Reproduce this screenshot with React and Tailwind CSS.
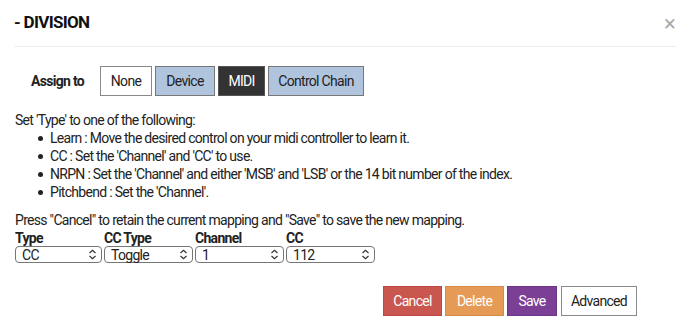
import React from 'react';

const Chevrons = () => (
  <svg width="9" height="11" viewBox="0 0 9 11" fill="none" stroke="#333" strokeWidth="1.2">
    <path d="M1.5 4 L4.5 1.2 L7.5 4" />
    <path d="M1.5 7 L4.5 9.8 L7.5 7" />
  </svg>
);

const Select = ({ value, width }) => (
  <div className={`flex items-center justify-between h-[17px] border border-[#767676] rounded-[4px] pl-[6px] pr-[4px] bg-white ${width}`}>
    <span className="leading-none">{value}</span>
    <Chevrons />
  </div>
);

const App = () => {
  const bullets = [
    'Learn : Move the desired control on your midi controller to learn it.',
    "CC : Set the 'Channel' and 'CC' to use.",
    "NRPN : Set the 'Channel' and either 'MSB' and 'LSB' or the 14 bit number of the index.",
    "Pitchbend : Set the 'Channel'.",
  ];

  return (
    <div className="w-[690px] h-[332px] bg-white text-[#222] font-['Roboto',sans-serif] text-[14px] tracking-[-0.05em] overflow-hidden">
      {/* header */}
      <div className="flex items-center justify-between h-[47px] mx-[14px] border-b border-[#eee]">
        <h1 className="text-[17px] font-bold text-[#111] tracking-[-0.04em]">- DIVISION</h1>
        <span className="text-[#aaa] text-[22px] leading-none mr-[1px] mt-[1px]">×</span>
      </div>

      {/* assign to */}
      <div className="flex items-center mt-[19px] ml-[31px] h-[30px]">
        <span className="font-bold w-[69px]">Assign to</span>
        <div className="flex gap-[3px] h-full">
          <button className="w-[52px] h-full border border-[#888] bg-white">None</button>
          <button className="w-[60px] h-full border border-[#777] bg-[#b0c4de]">Device</button>
          <button className="w-[47px] h-full border border-[#555] bg-[#333] text-white">MIDI</button>
          <button className="w-[96px] h-full border border-[#777] bg-[#b0c4de]">Control Chain</button>
        </div>
      </div>

      {/* instructions */}
      <div className="ml-[15px] mt-[15px] leading-[18px]">
        <p>Set 'Type' to one of the following:</p>
        <ul className="ml-[23px]">
          {bullets.map((b) => (
            <li key={b} className="flex items-center">
              <span className="w-[5px] h-[5px] rounded-full bg-[#222] mr-[7px]"></span>
              <span>{b}</span>
            </li>
          ))}
        </ul>
        <p className="mt-[10px]">Press "Cancel" to retain the current mapping and "Save" to save the new mapping.</p>
      </div>

      {/* selects */}
      <div className="flex ml-[15px] mt-[1px]">
        {[
          ['Type', 'CC', 'w-[87px]'],
          ['CC Type', 'Toggle', 'w-[89px]'],
          ['Channel', '1', 'w-[89px]'],
          ['CC', '112', 'w-[89px]'],
        ].map(([label, value, w], i) => (
          <div key={label} className={`flex flex-col ${i ? 'ml-[2px]' : ''}`}>
            <span className="font-bold leading-[16px]">{label}</span>
            <Select value={value} width={w} />
          </div>
        ))}
      </div>

      {/* footer buttons */}
      <div className="flex justify-end gap-[3px] mr-[53px] mt-[23px] h-[30px]">
        <button className="w-[59px] h-full bg-[#c9574f] border border-[#b84a43] text-white">Cancel</button>
        <button className="w-[59px] h-full bg-[#e59a55] border border-[#d88a45] text-white">Delete</button>
        <button className="w-[50px] h-full bg-[#7b3f96] border border-[#6c3486] text-white">Save</button>
        <button className="w-[76px] h-full bg-white border border-[#888] ml-[1px]">Advanced</button>
      </div>
    </div>
  );
};

export default App;
